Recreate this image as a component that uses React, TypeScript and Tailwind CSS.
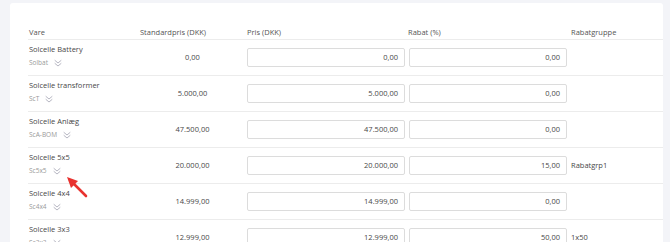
const ROWS = [
  { name: 'Solcelle Battery', code: 'Solbat', std: '0,00', pris: '0,00', rabat: '0,00', gruppe: '' },
  { name: 'Solcelle transformer', code: 'ScT', std: '5.000,00', pris: '5.000,00', rabat: '0,00', gruppe: '' },
  { name: 'Solcelle Anlæg', code: 'ScA-BOM', std: '47.500,00', pris: '47.500,00', rabat: '0,00', gruppe: '' },
  { name: 'Solcelle 5x5', code: 'Sc5x5', std: '20.000,00', pris: '20.000,00', rabat: '15,00', gruppe: 'Rabatgrp1' },
  { name: 'Solcelle 4x4', code: 'Sc4x4', std: '14.999,00', pris: '14.999,00', rabat: '0,00', gruppe: '' },
  { name: 'Solcelle 3x3', code: 'Sc3x3', std: '12.999,00', pris: '12.999,00', rabat: '50,00', gruppe: '1x50' },
];

const COLS = 'grid grid-cols-[112px_105px_162px_162px_75px]';

function Expand() {
  return (
    <svg width="8" height="8" viewBox="0 0 8 8" fill="none" stroke="#aeaebb" strokeWidth="0.9" strokeLinecap="round" strokeLinejoin="round">
      <path d="M1 1.5 L4 4 L7 1.5" />
      <path d="M1 4.5 L4 7 L7 4.5" />
    </svg>
  );
}

export default function App() {
  return (
    <div className="h-[242px] overflow-hidden bg-[#f3f4f8] pt-[3px] pl-[10px] pr-[7px] text-[#484848] [font-family:'Open_Sans',sans-serif]">
      <div className="relative h-[300px] rounded-[3px] bg-white pt-[24px] pl-[18px]">
        {/* header */}
        <div className={`${COLS} h-[13px] items-start border-b border-[#ececec] text-[7.5px] text-[#555]`}>
          <div className="px-[1px]">Vare</div>
          <div>Standardpris (DKK)</div>
          <div className="px-[2px]">Pris (DKK)</div>
          <div className="px-[1px]">Rabat (%)</div>
          <div className="px-[2px]">Rabatgruppe</div>
        </div>

        {ROWS.map((r) => (
          <div key={r.code} className={`${COLS} h-[36px] items-center border-b border-[#ececec] text-[7.5px]`}>
            <div className="flex flex-col self-start px-[1px] pt-[4px]">
              <span className="leading-[11px]">{r.name}</span>
              <div className="mt-[3px] flex items-center gap-[6px]">
                <span className="text-[6.5px] text-[#999] leading-[9px]">{r.code}</span>
                <Expand />
              </div>
            </div>
            <div className="text-center">{r.std}</div>
            <div className="px-[2px]">
              <div className="flex h-[19px] items-center justify-end rounded-[2px] border border-[#dcdcdc] px-[6px]">
                {r.pris}
              </div>
            </div>
            <div className="px-[2px]">
              <div className="flex h-[19px] items-center justify-end rounded-[2px] border border-[#dcdcdc] px-[6px]">
                {r.rabat}
              </div>
            </div>
            <div className="px-[2px]">{r.gruppe}</div>
          </div>
        ))}

        {/* red pointer arrow */}
        <svg className="absolute left-[43px] top-[169px]" width="40" height="30" viewBox="0 0 40 30">
          <line x1="33" y1="24" x2="20" y2="11" stroke="#e8322f" strokeWidth="2.6" strokeLinecap="round" />
          <polygon points="14,5 25,9 18,16" fill="#e8322f" />
        </svg>
      </div>
    </div>
  );
}
